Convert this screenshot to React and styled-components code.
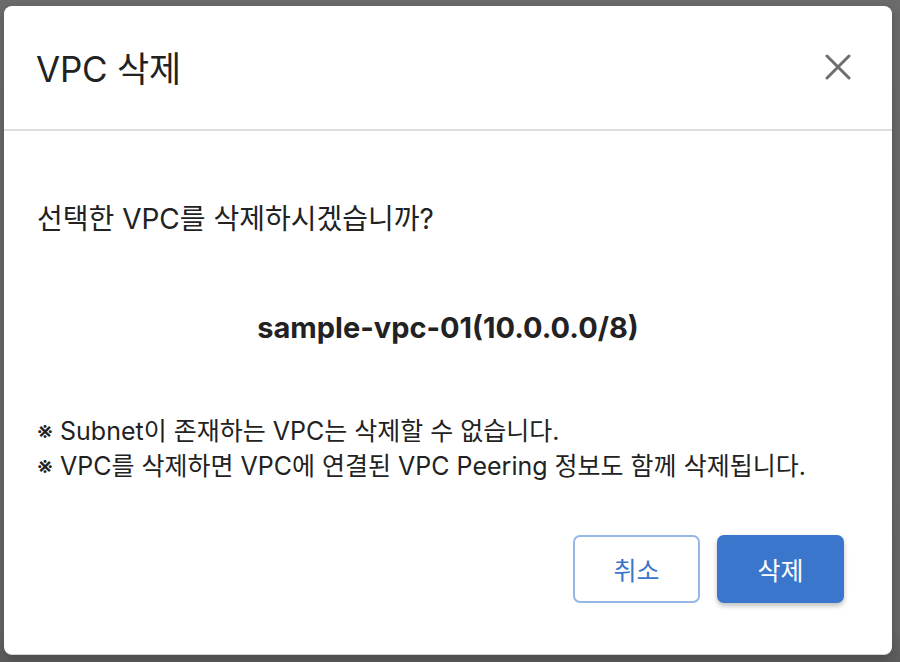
import React from 'react'
import styled, { createGlobalStyle } from 'styled-components'

const GlobalStyle = createGlobalStyle`
  *, *::before, *::after {
    box-sizing: border-box;
  }
  html, body {
    margin: 0;
    padding: 0;
    background: #6b6b6b;
  }
  body {
    font-family: Inter, "Noto Sans CJK KR", sans-serif;
    color: #222;
  }
`

const Backdrop = styled.div`
  width: 900px;
  height: 662px;
  padding: 6px 8px 0 4px;
  background: linear-gradient(to bottom, #6c6c6c 0%, #686868 95%, #5c5c5c 100%);
`

const Dialog = styled.div`
  width: 888px;
  height: 648px;
  background: #fff;
  border-radius: 8px;
  box-shadow: 0 1px 0 #d6d6d6, 0 4px 12px rgba(0, 0, 0, 0.25);
  display: flex;
  flex-direction: column;
  overflow: hidden;
`

const Header = styled.div`
  height: 125px;
  flex-shrink: 0;
  display: flex;
  align-items: center;
  justify-content: space-between;
  padding: 0 40px 2px 32px;
  border-bottom: 2px solid #dedede;
`

const Title = styled.h1`
  margin: 0;
  font-size: 35px;
  font-weight: 400;
  color: #222;
  letter-spacing: -0.2px;
`

const CloseButton = styled.button`
  border: 0;
  background: none;
  padding: 0;
  width: 28px;
  height: 28px;
  display: flex;
  align-items: center;
  justify-content: center;
  cursor: pointer;
`

const Body = styled.div`
  flex: 1;
  padding: 68px 33px 0 33px;
  display: flex;
  flex-direction: column;
`

const Question = styled.p`
  margin: 0;
  font-size: 28px;
  line-height: 40px;
`

const Target = styled.p`
  margin: 69px 0 0 0;
  font-size: 29px;
  line-height: 40px;
  font-weight: 700;
  text-align: center;
`

const Notes = styled.ul`
  list-style: none;
  margin: 66px 0 0 0;
  padding: 0;
  font-size: 25px;
  line-height: 35px;
`

const Footer = styled.div`
  display: flex;
  justify-content: flex-end;
  gap: 17px;
  padding: 0 48px 51px 0;
`

const Button = styled.button`
  width: 127px;
  height: 68px;
  border-radius: 7px;
  font-family: inherit;
  font-size: 25px;
  cursor: pointer;
  border: 2px solid ${p => (p.$primary ? '#3a76cc' : '#94b7e8')};
  background: ${p => (p.$primary ? '#3a76cc' : '#fff')};
  color: ${p => (p.$primary ? '#fff' : '#3a76cc')};
  box-shadow: ${p => (p.$primary ? '0 3px 5px rgba(0,0,0,0.25)' : 'none')};
`

export default function App() {
  return (
    <>
      <GlobalStyle />
      <Backdrop>
        <Dialog>
          <Header>
            <Title>VPC 삭제</Title>
            <CloseButton aria-label="닫기">
              <svg width="26" height="26" viewBox="0 0 26 26">
                <path d="M2 2L24 24M24 2L2 24" stroke="#6e6e6e" strokeWidth="3" strokeLinecap="round" />
              </svg>
            </CloseButton>
          </Header>
          <Body>
            <Question>선택한 VPC를 삭제하시겠습니까?</Question>
            <Target>sample-vpc-01(10.0.0.0/8)</Target>
            <Notes>
              <li>※ Subnet이 존재하는 VPC는 삭제할 수 없습니다.</li>
              <li>※ VPC를 삭제하면 VPC에 연결된 VPC Peering 정보도 함께 삭제됩니다.</li>
            </Notes>
          </Body>
          <Footer>
            <Button>취소</Button>
            <Button $primary>삭제</Button>
          </Footer>
        </Dialog>
      </Backdrop>
    </>
  )
}
